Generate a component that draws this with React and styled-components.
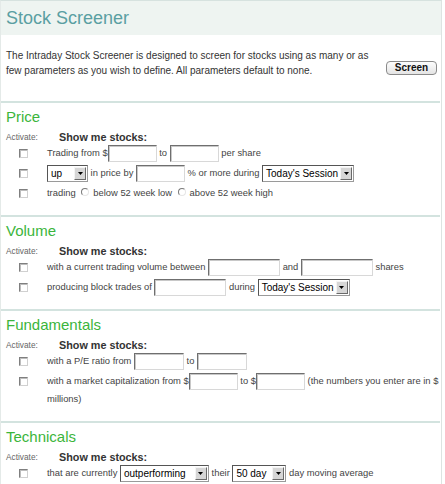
import React from "react";
import styled, { createGlobalStyle } from "styled-components";

const Global = createGlobalStyle`
  html, body { margin: 0; padding: 0; background: #fff; }
  body { font-family: "Liberation Sans", Arial, sans-serif; }
`;

const Page = styled.div`
  width: 442px;
  height: 484px;
  border-top: 1px solid #d6e2df;
  border-right: 1px solid #dde4e2;
  border-left: 1px solid #e4eae8;
  box-sizing: border-box;
  overflow: hidden;
`;

const Header = styled.div`
  height: 34px;
  background: #eef4f1;
  display: flex;
  align-items: center;
  padding-left: 5px;
`;

const Title = styled.h1`
  margin: 0;
  font-size: 18px;
  font-weight: normal;
  color: #5a9fa2;
  line-height: 34px;
`;

const Intro = styled.div`
  display: flex;
  align-items: center;
  justify-content: space-between;
  padding: 13px 4px 23px 5px;
`;

const IntroText = styled.p`
  margin: 0;
  font-size: 10px;
  line-height: 15px;
  color: #333;
`;

const ScreenButton = styled.button`
  font-family: inherit;
  font-size: 10px;
  font-weight: bold;
  color: #111;
  width: 51px;
  height: 14px;
  padding: 0;
  margin-top: 9px;
  border: 1px solid #8a8a8a;
  border-radius: 4px;
  background: linear-gradient(#fdfdfd, #e4e4e4);
  line-height: 12px;
`;

const Section = styled.div`
  border-top: 2px solid #d3e3df;
  padding-bottom: 12px;
  margin-right: 1px;
`;

const SectionTitle = styled.h2`
  margin: 4px 0 0 0;
  padding-left: 5px;
  font-size: 15px;
  line-height: 20px;
  font-weight: normal;
  color: #3bb53b;
`;

const ActivateRow = styled.div`
  display: flex;
  align-items: center;
  height: 12px;
  margin-top: 4px;
  padding-left: 5px;
`;

const ActivateLabel = styled.span`
  width: 53px;
  font-size: 8.3px;
  color: #666;
`;

const ShowMe = styled.span`
  font-size: 10.8px;
  font-weight: bold;
  color: #333;
`;

const Row = styled.div`
  display: flex;
  align-items: flex-start;
  padding: 1px 0;
`;

const CheckCell = styled.div`
  width: 46px;
  height: 18px;
  flex: none;
  display: flex;
  align-items: center;
  padding-left: 18px;
  box-sizing: border-box;
`;

const Checkbox = styled.span`
  display: block;
  width: 9px;
  height: 9px;
  box-sizing: border-box;
  background: #fff;
  border: 1px solid;
  border-color: #7f7f7f #d0d0d0 #d0d0d0 #7f7f7f;
  box-shadow: inset 1px 1px 0 #bdbdbd;
`;

const RowContent = styled.div`
  flex: 1;
  font-size: 9.4px;
  line-height: 18px;
  color: #444;
`;

const Input = styled.span`
  display: inline-block;
  vertical-align: middle;
  width: ${(p) => p.$w}px;
  height: 17px;
  box-sizing: border-box;
  background: #fff;
  border: 1px solid;
  border-color: #6f6f6f #d8d8d8 #d8d8d8 #6f6f6f;
  box-shadow: inset 1px 1px 0 #c8c8c8;
`;

const SelectBox = styled.span`
  display: inline-flex;
  align-items: center;
  justify-content: space-between;
  vertical-align: middle;
  width: ${(p) => p.$w}px;
  height: 17px;
  box-sizing: border-box;
  border: 1px solid;
  border-color: #555 #9a9a9a #9a9a9a #555;
  background: #fff;
  padding: 0 1px 0 3px;
`;

const SelectText = styled.span`
  font-size: 10px;
  color: #000;
  line-height: 15px;
`;

const ArrowBtn = styled.span`
  width: 12px;
  height: 13px;
  box-sizing: border-box;
  background: #d6d6d6;
  border: 1px solid;
  border-color: #f4f4f4 #6a6a6a #6a6a6a #f4f4f4;
  display: flex;
  align-items: center;
  justify-content: center;
`;

const Radio = styled.span`
  display: inline-block;
  vertical-align: middle;
  width: 8px;
  height: 8px;
  box-sizing: border-box;
  border-radius: 50%;
  border: 1px solid;
  border-color: #7a7a7a #e6e6e6 #e6e6e6 #7a7a7a;
  margin: -3px 4px 0 3px;
`;

const Select = ({ w, value }) => (
  <SelectBox $w={w}>
    <SelectText>{value}</SelectText>
    <ArrowBtn>
      <svg width="5" height="3" viewBox="0 0 5 3">
        <path d="M0 0h5L2.5 3z" fill="#000" />
      </svg>
    </ArrowBtn>
  </SelectBox>
);

const Activate = () => (
  <ActivateRow>
    <ActivateLabel>Activate:</ActivateLabel>
    <ShowMe>Show me stocks:</ShowMe>
  </ActivateRow>
);

const Line = ({ children }) => (
  <Row>
    <CheckCell>
      <Checkbox />
    </CheckCell>
    <RowContent>{children}</RowContent>
  </Row>
);

export default function App() {
  return (
    <>
      <Global />
      <Page>
        <Header>
          <Title>Stock Screener</Title>
        </Header>
        <Intro>
          <IntroText>
            The Intraday Stock Screener is designed to screen for stocks using as many or as
            <br />
            few parameters as you wish to define. All parameters default to none.
          </IntroText>
          <ScreenButton>Screen</ScreenButton>
        </Intro>

        <Section>
          <SectionTitle>Price</SectionTitle>
          <Activate />
          <Line>
            Trading from $<Input $w={49} /> to <Input $w={49} /> per share
          </Line>
          <Line>
            <Select w={41} value="up" /> in price by <Input $w={49} /> % or more during{" "}
            <Select w={92} value="Today's Session" />
          </Line>
          <Line>
            trading <Radio />below 52 week low <Radio />above 52 week high
          </Line>
        </Section>

        <Section>
          <SectionTitle>Volume</SectionTitle>
          <Activate />
          <Line>
            with a current trading volume between <Input $w={72} /> and <Input $w={72} /> shares
          </Line>
          <Line>
            producing block trades of <Input $w={72} /> during <Select w={92} value="Today's Session" />
          </Line>
        </Section>

        <Section>
          <SectionTitle>Fundamentals</SectionTitle>
          <Activate />
          <Line>
            with a P/E ratio from <Input $w={50} /> to <Input $w={50} />
          </Line>
          <Line>
            with a market capitalization from $<Input $w={49} /> to $<Input $w={49} /> (the numbers you enter are
            in&nbsp;$ millions)
          </Line>
        </Section>

        <Section>
          <SectionTitle>Technicals</SectionTitle>
          <Activate />
          <Line>
            that are currently <Select w={89} value="outperforming" /> their <Select w={54} value="50 day" /> day
            moving average
          </Line>
        </Section>
      </Page>
    </>
  );
}
